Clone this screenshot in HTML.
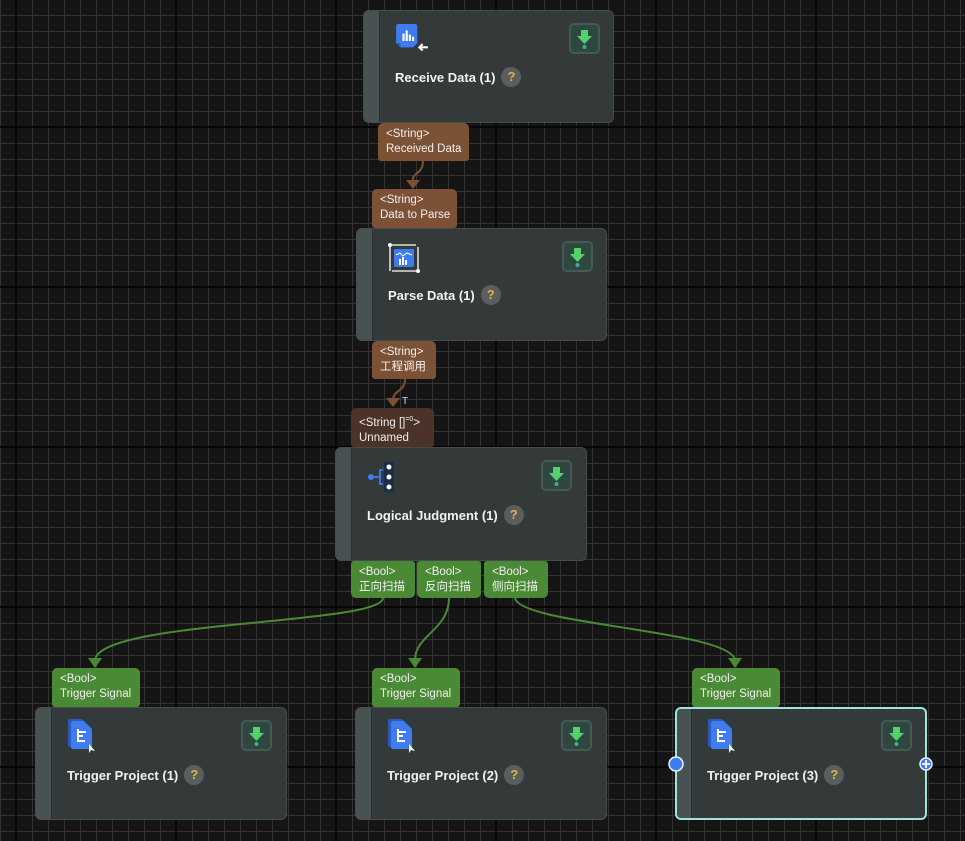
<!DOCTYPE html>
<html><head><meta charset="utf-8"><style>
html,body{margin:0;padding:0}
body{width:965px;height:841px;overflow:hidden;position:relative;background:#151515;font-family:"Liberation Sans","Noto Sans CJK SC",sans-serif;
background-image:
linear-gradient(to right,#060606 2px,transparent 2px),
linear-gradient(to bottom,#060606 2px,transparent 2px),
linear-gradient(to right,#333 1px,transparent 1px),
linear-gradient(to bottom,#333 1px,transparent 1px);
background-size:160px 160px,160px 160px,16px 16px,16px 16px;
background-position:15px 0,0 126px,0 0,0 15px;}
.node{position:absolute;width:249px;height:110px;background:#343a3a;border:1px solid #454c4c;border-radius:6px;overflow:hidden;box-sizing:border-box}
.node .strip{position:absolute;left:0;top:0;bottom:0;width:15px;background:#485252;border-right:1px solid #2b3030}
.node .title{position:absolute;left:31px;top:56px;color:#f2f2f2;font-weight:bold;font-size:13px;white-space:nowrap;display:flex;align-items:center}
.help{display:inline-block;width:20px;height:20px;border-radius:10px;background:#5b5e5e;color:#e2b23c;font-size:13px;text-align:center;line-height:20px;margin-left:6px;font-weight:bold}
.dl{position:absolute;left:204px;top:12px;width:31px;height:31px;box-sizing:border-box;border:2px solid #465a55;border-radius:5px;background:#2e4840}
.icon{position:absolute;left:30px;top:12px}
.lab{position:absolute;color:#f0f0f0;font-size:11.5px;line-height:15px;padding:4px 0 0 8px;box-sizing:border-box;border-radius:5px 5px 3px 3px;white-space:nowrap;overflow:hidden}
.br{background:#7c5136}.dk{background:#4c3327}.gr{background:#4a8a35}
.sel{border:2px solid #9ee6dc}
</style></head><body>
<svg width="965" height="841" style="position:absolute;left:0;top:0">
<g fill="none" stroke-width="2">
<path d="M423 161 C423 175 411 172 413 182" stroke="#7c5136"/>
<path d="M405 379 C405 392 393 390 393 400" stroke="#7c5136"/>
<path d="M383 598 C380 625 100 620 95 660" stroke="#4a8a35"/>
<path d="M449 598 C449 630 415 635 415 660" stroke="#4a8a35"/>
<path d="M515 598 C520 625 730 630 735 660" stroke="#4a8a35"/>
</g>
<g>
<polygon points="406,180 420,180 413,189" fill="#7c5136"/>
<polygon points="386,398 400,398 393,407" fill="#7c5136"/>
<polygon points="88,658 102,658 95,668" fill="#4a8a35"/>
<polygon points="408,658 422,658 415,668" fill="#4a8a35"/>
<polygon points="728,658 742,658 735,668" fill="#4a8a35"/>
</g>
<text x="402" y="404" fill="#cfd6ff" font-size="10" font-family="Liberation Sans">T</text>
</svg>

<div class="lab br" style="left:378px;top:123px;width:91px;height:38px">&lt;String&gt;<br>Received Data</div>
<div class="lab br" style="left:372px;top:189px;width:85px;height:39px">&lt;String&gt;<br>Data to Parse</div>
<div class="lab br" style="left:372px;top:341px;width:64px;height:38px">&lt;String&gt;<br>工程调用</div>
<div class="lab dk" style="left:351px;top:408px;width:83px;height:39px">&lt;String []<sup style="font-size:7px">=0</sup>&gt;<br>Unnamed</div>
<div class="lab gr" style="left:351px;top:561px;width:64px;height:37px;border-radius:3px 3px 5px 5px">&lt;Bool&gt;<br>正向扫描</div>
<div class="lab gr" style="left:417px;top:561px;width:64px;height:37px;border-radius:3px 3px 5px 5px">&lt;Bool&gt;<br>反向扫描</div>
<div class="lab gr" style="left:484px;top:561px;width:64px;height:37px;border-radius:3px 3px 5px 5px">&lt;Bool&gt;<br>侧向扫描</div>
<div class="lab gr" style="left:52px;top:668px;width:88px;height:39px">&lt;Bool&gt;<br>Trigger Signal</div>
<div class="lab gr" style="left:372px;top:668px;width:88px;height:39px">&lt;Bool&gt;<br>Trigger Signal</div>
<div class="lab gr" style="left:692px;top:668px;width:88px;height:39px">&lt;Bool&gt;<br>Trigger Signal</div>

<!-- Receive Data -->
<div class="node" style="left:363px;top:10px;width:251px;height:113px">
<div class="strip"></div>
<svg class="icon" style="left:30px;top:12px" width="36" height="36" viewBox="0 0 34 34"><path d="M2 3 a2 2 0 0 1 2-2 h16 a2 2 0 0 1 2 2 v16 l-4 4 h-12 l-4 -4z" fill="#3e7cf0"/><path d="M2 19 l4 4 v-4z" fill="#2a5bb8"/><g fill="#fff"><rect x="8" y="10" width="2" height="7"/><rect x="11" y="7" width="2" height="10"/><rect x="14" y="11" width="2" height="6"/><rect x="17" y="13" width="2" height="4"/></g><path d="M32 23 h-8 M27 20 l-3 3 3 3" stroke="#fff" stroke-width="2" fill="none"/></svg>
<div class="title" style="top:56px">Receive Data (1)<span class="help">?</span></div>
<div class="dl" style="left:205px;top:12px"><svg width="27" height="27" viewBox="0 0 27 27"><path d="M10 5 h7 v6 h4 l-7.5 8 l-7.5 -8 h4z" fill="#52d26a"/><circle cx="13.5" cy="22" r="2" fill="#48a890"/></svg></div>
</div>

<!-- Parse Data -->
<div class="node" style="left:356px;top:228px;width:251px;height:113px">
<div class="strip"></div>
<svg class="icon" width="34" height="34" viewBox="0 0 34 34"><path d="M3 30 V4 M3 4 h26 M5 30 h26 V6" stroke="#ddd" stroke-width="1.6" fill="none"/><circle cx="3" cy="4" r="2" fill="#fff"/><circle cx="31" cy="30" r="2" fill="#fff"/><rect x="7" y="8" width="20" height="18" rx="1" fill="#3e7cf0"/><path d="M9 14 l4 -2 3 3 4 -3 5 2" stroke="#fff" fill="none"/><g fill="#fff"><rect x="12" y="18" width="2" height="6"/><rect x="15" y="16" width="2" height="8"/><rect x="18" y="19" width="2" height="5"/></g></svg>
<div class="title" style="top:56px">Parse Data (1)<span class="help">?</span></div>
<div class="dl" style="left:205px;top:12px"><svg width="27" height="27" viewBox="0 0 27 27"><path d="M10 5 h7 v6 h4 l-7.5 8 l-7.5 -8 h4z" fill="#52d26a"/><circle cx="13.5" cy="22" r="2" fill="#48a890"/></svg></div>
</div>

<!-- Logical Judgment -->
<div class="node" style="left:335px;top:447px;width:252px;height:114px">
<div class="strip"></div>
<svg class="icon" width="34" height="34" viewBox="0 0 34 34"><rect x="18" y="2" width="10" height="30" rx="2" fill="#1c2c48"/><circle cx="23" cy="7" r="2.5" fill="#fff"/><circle cx="23" cy="17" r="2.5" fill="#fff"/><circle cx="23" cy="27" r="2.5" fill="#fff"/><circle cx="5" cy="17" r="3" fill="#3e7cf0"/><path d="M5 17 h9 M17 10 h-3 v14 h3" stroke="#3e7cf0" stroke-width="1.8" fill="none"/></svg>
<div class="title" style="top:57px">Logical Judgment (1)<span class="help">?</span></div>
<div class="dl" style="left:205px;top:12px"><svg width="27" height="27" viewBox="0 0 27 27"><path d="M10 5 h7 v6 h4 l-7.5 8 l-7.5 -8 h4z" fill="#52d26a"/><circle cx="13.5" cy="22" r="2" fill="#48a890"/></svg></div>
</div>

<!-- Trigger Projects -->
<div class="node" style="left:35px;top:707px;width:252px;height:113px">
<div class="strip"></div>
<svg class="icon" style="left:31px;top:10px" width="34" height="36" viewBox="0 0 34 36"><path d="M1 3 a2 2 0 0 1 2-2 h12 l7 7 v19 a2 2 0 0 1 -2 2 h-17 a2 2 0 0 1 -2-2z" fill="#2a5bb8"/><path d="M4 5 a2 2 0 0 1 2-2 h11 l8 8 v18 a2 2 0 0 1 -2 2 h-17 a2 2 0 0 1 -2-2z" fill="#3e7cf0"/><path d="M11 11 v13 M11 14 h8 M11 18 h5 M11 23 h7" stroke="#fff" stroke-width="2"/><path d="M22 26 l0 9 2-3 4 1z" fill="#fff"/></svg>
<div class="title" style="top:57px">Trigger Project (1)<span class="help">?</span></div>
<div class="dl" style="left:205px;top:12px"><svg width="27" height="27" viewBox="0 0 27 27"><path d="M10 5 h7 v6 h4 l-7.5 8 l-7.5 -8 h4z" fill="#52d26a"/><circle cx="13.5" cy="22" r="2" fill="#48a890"/></svg></div>
</div>
<div class="node" style="left:355px;top:707px;width:252px;height:113px">
<div class="strip"></div>
<svg class="icon" style="left:31px;top:10px" width="34" height="36" viewBox="0 0 34 36"><path d="M1 3 a2 2 0 0 1 2-2 h12 l7 7 v19 a2 2 0 0 1 -2 2 h-17 a2 2 0 0 1 -2-2z" fill="#2a5bb8"/><path d="M4 5 a2 2 0 0 1 2-2 h11 l8 8 v18 a2 2 0 0 1 -2 2 h-17 a2 2 0 0 1 -2-2z" fill="#3e7cf0"/><path d="M11 11 v13 M11 14 h8 M11 18 h5 M11 23 h7" stroke="#fff" stroke-width="2"/><path d="M22 26 l0 9 2-3 4 1z" fill="#fff"/></svg>
<div class="title" style="top:57px">Trigger Project (2)<span class="help">?</span></div>
<div class="dl" style="left:205px;top:12px"><svg width="27" height="27" viewBox="0 0 27 27"><path d="M10 5 h7 v6 h4 l-7.5 8 l-7.5 -8 h4z" fill="#52d26a"/><circle cx="13.5" cy="22" r="2" fill="#48a890"/></svg></div>
</div>
<div class="node sel" style="left:675px;top:707px;width:252px;height:113px">
<div class="strip" style="width:14px"></div>
<svg class="icon" style="left:30px;top:9px" width="34" height="36" viewBox="0 0 34 36"><path d="M1 3 a2 2 0 0 1 2-2 h12 l7 7 v19 a2 2 0 0 1 -2 2 h-17 a2 2 0 0 1 -2-2z" fill="#2a5bb8"/><path d="M4 5 a2 2 0 0 1 2-2 h11 l8 8 v18 a2 2 0 0 1 -2 2 h-17 a2 2 0 0 1 -2-2z" fill="#3e7cf0"/><path d="M11 11 v13 M11 14 h8 M11 18 h5 M11 23 h7" stroke="#fff" stroke-width="2"/><path d="M22 26 l0 9 2-3 4 1z" fill="#fff"/></svg>
<div class="title" style="top:56px;left:30px">Trigger Project (3)<span class="help">?</span></div>
<div class="dl" style="left:204px;top:11px"><svg width="27" height="27" viewBox="0 0 27 27"><path d="M10 5 h7 v6 h4 l-7.5 8 l-7.5 -8 h4z" fill="#52d26a"/><circle cx="13.5" cy="22" r="2" fill="#48a890"/></svg></div>
</div>
<svg width="965" height="841" style="position:absolute;left:0;top:0">
<circle cx="676" cy="764" r="7" fill="#3e7cf0" stroke="#e8f0ff" stroke-width="1.5"/>
<circle cx="926" cy="764" r="6" fill="#3e7cf0" stroke="#e8f0ff" stroke-width="1.5"/>
<path d="M922 764 h8 M926 760 v8" stroke="#fff" stroke-width="1.8"/>
</svg>
</body></html>
